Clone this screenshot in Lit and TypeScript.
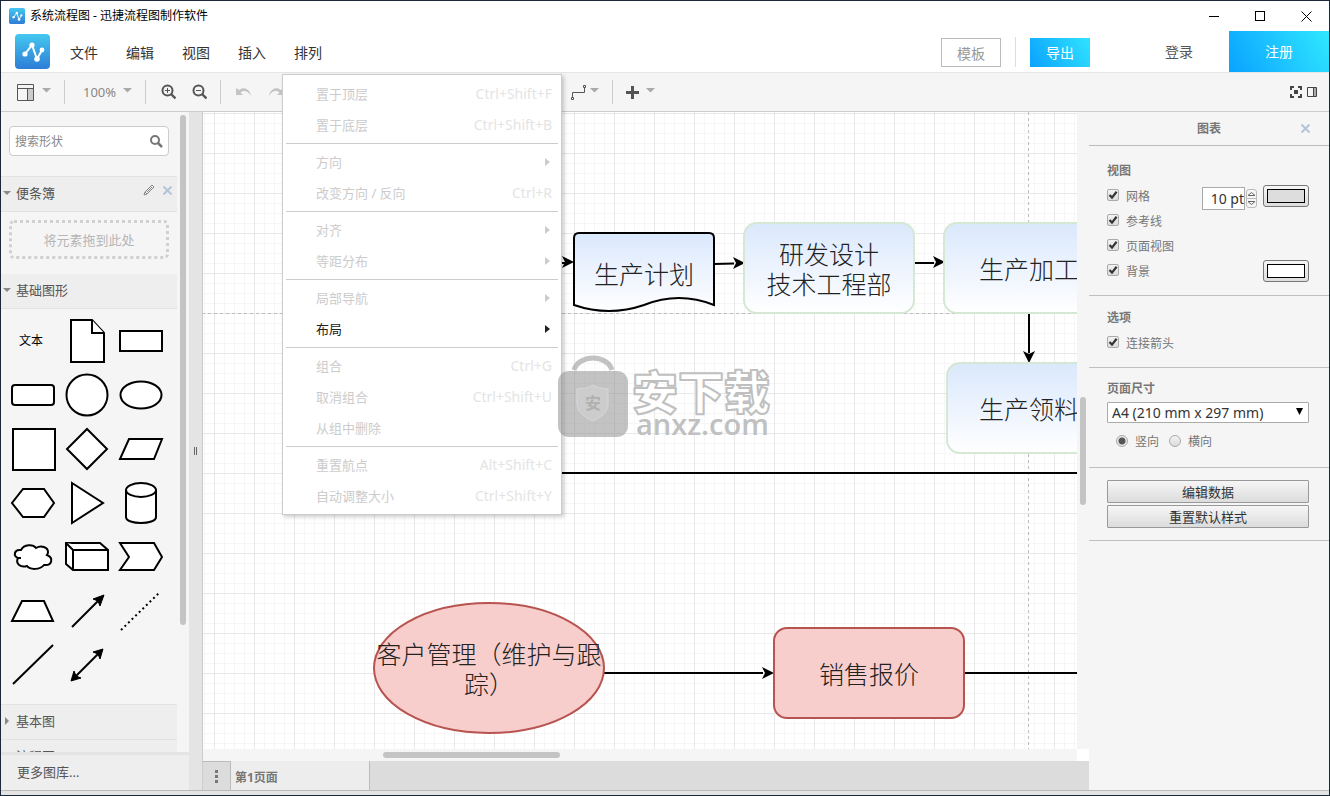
import { LitElement, html, svg, css } from "lit";
import { customElement, state } from "lit/decorators.js";
import { classMap } from "lit/directives/class-map.js";

interface MenuItem {
  label: string;
  keys?: string;
  submenu?: boolean;
  enabled?: boolean;
}

const ARRANGE_MENU: MenuItem[][] = [
  [
    { label: "置于顶层", keys: "Ctrl+Shift+F" },
    { label: "置于底层", keys: "Ctrl+Shift+B" },
  ],
  [
    { label: "方向", submenu: true },
    { label: "改变方向 / 反向", keys: "Ctrl+R" },
  ],
  [
    { label: "对齐", submenu: true },
    { label: "等距分布", submenu: true },
  ],
  [
    { label: "局部导航", submenu: true },
    { label: "布局", submenu: true, enabled: true },
  ],
  [
    { label: "组合", keys: "Ctrl+G" },
    { label: "取消组合", keys: "Ctrl+Shift+U" },
    { label: "从组中删除" },
  ],
  [
    { label: "重置航点", keys: "Alt+Shift+C" },
    { label: "自动调整大小", keys: "Ctrl+Shift+Y" },
  ],
];

const HEADER_MENUS = ["文件", "编辑", "视图", "插入", "排列"];

// Palette stencils, each drawn in a 54 x 54 cell whose centre is 27,27.
const STENCILS = [
  { name: "便笺", art: svg`<path d="M11 6H32L44 19V48H11Z"/><path d="M32 6V19H44"/>` },
  { name: "矩形", art: svg`<rect x="6" y="17" width="42" height="20"/>` },
  { name: "圆角矩形", art: svg`<rect x="6" y="17" width="42" height="20" rx="3"/>` },
  { name: "圆形", art: svg`<circle cx="27" cy="27" r="20.5"/>` },
  { name: "椭圆", art: svg`<ellipse cx="27" cy="27" rx="20.5" ry="13.5"/>` },
  { name: "正方形", art: svg`<rect x="7" y="7" width="42" height="41"/>` },
  { name: "菱形", art: svg`<path d="M27 7L47 27L27 47L7 27Z"/>` },
  { name: "平行四边形", art: svg`<path d="M15 17H48L40 37H6Z"/>` },
  { name: "六边形", art: svg`<path d="M17 13H38L48 27L38 41H17L6 27Z"/>` },
  { name: "三角形", art: svg`<path d="M12 7L43 27L12 47Z"/>` },
  {
    name: "圆柱",
    art: svg`<path d="M12 14V41C12 49 42 49 42 41V14"/><ellipse cx="27" cy="14" rx="15" ry="7"/>`,
  },
  {
    name: "云",
    art: svg`<path d="M15 20C18 14 27 14 30 18C35 15 42 17 42 22C42 23 42 24 41 25C48 28 46 36 38 35C34 40 24 40 21 36C15 38 9 34 12 28C7 26 8 19 15 20Z"/><path d="M11 28H15"/>`,
  },
  {
    name: "立方体",
    art: svg`<path d="M6 13H40L48 20V40H13L6 34Z"/><path d="M6 13L13 20H48M13 20V40"/>`,
  },
  { name: "步骤", art: svg`<path d="M6 13H40L48 27L40 40H6L15 27Z"/>` },
  { name: "梯形", art: svg`<path d="M16 17H38L47 37H6Z"/>` },
  {
    name: "箭头",
    art: svg`<path d="M12 43L39 16"/><path class="solid" d="M44 11L40 22L38 17L33 15Z"/>`,
  },
  { name: "虚线", art: svg`<path class="dotted" d="M7 46L46 8"/>` },
  { name: "直线", art: svg`<path d="M7 46L47 7"/>` },
  {
    name: "双向箭头",
    art: svg`<path d="M15 39L39 15"/><path class="solid" d="M43 11L40 21L38 16L33 14Z M11 43L14 33L16 38L21 40Z"/>`,
  },
];

@customElement("app-root")
export class AppRoot extends LitElement {
  @state() private orientation = "portrait";

  static styles = css`
    :host {
      display: flex;
      flex-direction: column;
      position: relative;
      box-sizing: border-box;
      height: 100vh;
      border: 1px solid #1b2838;
      background: #f5f5f5;
      color: #333;
      font: 13px/20px "Noto Sans", "Noto Sans CJK SC", sans-serif;
      overflow: hidden;
    }
    * { box-sizing: border-box; }
    button, input, select { font: inherit; color: inherit; margin: 0; }
    button { padding: 0; border: 0; background: none; }
    svg { display: block; fill: none; }

    .titlebar {
      display: flex; align-items: center; flex: none; height: 30px;
      padding-left: 8px; background: #fff; color: #000; font-size: 12px;
    }
    .titlebar .caption { flex: 1; padding-left: 5px; }
    .winbtn { width: 46px; height: 30px; display: grid; place-items: center; }

    .header {
      display: flex; align-items: center; flex: none; height: 42px;
      padding-left: 14px; background: #fff; border-bottom: 1px solid #e5e5e5;
      font-size: 14px;
    }
    .nav { display: flex; flex: 1; margin-left: 6px; }
    .navitem { position: relative; }
    .navitem > button { width: 56px; height: 41px; padding-top: 2px; }
    .template { width: 60px; height: 29px; margin-top: 2px; padding-top: 2px; border: 1px solid #bbb; color: #999; }
    .rule { width: 1px; height: 30px; background: #ddd; margin: 0 14px; }
    .export { width: 60px; height: 29px; margin-top: 2px; color: #fff; background: linear-gradient(60deg, #0aa2ff, #30e3ff); }
    .login { width: 60px; height: 41px; margin: 0 20px 0 59px; color: #555; }
    .register { width: 100px; height: 41px; color: #fff; background: linear-gradient(60deg, #0aa2ff, #30e8ff); }

    .menu {
      position: absolute; left: 2px; top: 43px; z-index: 5; width: 280px;
      padding: 4px 3px 2px; margin: 0; background: #fff; border: 1px solid #ccc;
      box-shadow: 2px 2px 4px rgba(0, 0, 0, 0.2); font-size: 13px;
    }
    .menu .group + .group { border-top: 1px solid #ccc; margin-top: 2px; padding-top: 3px; }
    .menu button {
      display: flex; align-items: center; justify-content: space-between;
      width: 100%; height: 31px; padding: 0 6px 2px 30px; color: #ccc; text-align: left;
    }
    .menu button.enabled { color: #222; }
    .menu .keys { color: #e4e4e4; font-size: 14px; }
    .menu svg { fill: currentColor; margin-right: 2px; }

    .toolbar {
      display: flex; align-items: center; flex: none; height: 39px;
      padding: 0 12px 0 16px; border-bottom: 1px solid #ccc; color: #888; font-size: 13px;
    }
    .toolbar button { display: flex; align-items: center; height: 30px; }
    .toolbar .bar { width: 1px; height: 24px; background: #ccc; margin: 0 13px; }
    .toolbar .gap { gap: 7px; }
    .toolbar .pair { display: flex; gap: 16px; margin-left: 2px; }
    .toolbar .format { width: 287px; }
    .toolbar .fill { flex: 1; }
    .toolbar .tight { gap: 4px; }
    .toolbar .view-toggles { display: flex; gap: 5px; }
    .toolbar .zoom { margin-left: 5px; gap: 7px; }

    .work { display: flex; flex: 1; min-height: 0; }
    .sidebar { display: flex; flex-direction: column; flex: none; width: 188px; }
    .palette { display: flex; flex: 1; min-height: 0; overflow: hidden; }
    .shapes { flex: 1; overflow: hidden; }
    .search {
      display: flex; align-items: center; height: 30px; margin: 14px 8px 20px;
      padding: 0 5px; border: 1px solid #ccc; border-radius: 4px; background: #fff;
    }
    .search input { flex: 1; min-width: 0; border: 0; padding: 2px 0 0; font-size: 12px; outline: 0; background: none; }
    .search input::placeholder { color: #888; opacity: 1; }
    .section {
      display: flex; align-items: center; width: 100%; height: 35px; gap: 5px;
      padding: 0 0 2px 2px; border-bottom: 1px solid #e2e2e2; background: #eee; color: #555; text-align: left;
    }
    .section.top { border-top: 1px solid #e2e2e2; height: 36px; }
    .section .title { flex: 1; display: flex; align-items: center; gap: 5px; }
    .section .tools { display: flex; gap: 8px; padding: 0 5px 6px 0; }
    .drop {
      display: grid; place-items: center; height: 39px; margin: 8px 8px 15px;
      border: 3px dotted #d0d0d0; border-radius: 5px; color: #b5b5b5;
    }
    .grid { display: grid; grid-template-columns: repeat(3, 54px); grid-auto-rows: 54px; padding: 5px 5px 12px; }
    .grid button { display: grid; place-items: center; }
    .grid .text { font-size: 12px; color: #000; padding-right: 4px; }
    .grid svg { width: 54px; height: 54px; fill: #fff; stroke: #000; stroke-width: 2; }
    .grid .solid { fill: #000; stroke-width: 1; }
    .grid .dotted { stroke-dasharray: 2 3; }
    .vbar { flex: none; width: 12px; background: #f5f5f5; padding: 0 3px; }
    .vbar i { display: block; width: 6px; border-radius: 3px; background: #c4c4c4; }
    .vbar .side { height: 510px; margin-top: 3px; }
    .vbar .page { height: 108px; margin-top: 285px; }
    .more { flex: none; height: 38px; border-top: 3px solid #e4e4e4; padding: 0 0 2px 16px; background: #eee; text-align: left; color: #555; }
    .splitter { flex: none; width: 14px; background: #e4e4e4; display: grid; place-items: center; border-right: 1px solid #ccc; }

    .center { display: flex; flex-direction: column; flex: 1; min-width: 0; background: #fff; }
    .viewport { display: flex; flex: 1; min-height: 0; }
    .canvas { flex: 1; min-width: 0; height: 100%; }
    .canvas text { font: 25px "Liberation Serif", "Noto Sans CJK SC", serif; font-weight: 300; fill: #222; text-anchor: middle; }
    .hbar { flex: none; height: 12px; margin-right: 12px; padding: 3px 180px; background: #f5f5f5; }
    .hbar i { display: block; width: 177px; height: 6px; border-radius: 3px; background: #c4c4c4; }
    .tabs { display: flex; flex: none; height: 29px; background: #dcdcdc; font-size: 12px; color: #777; }
    .tabs .dots { width: 28px; display: grid; place-items: center; border: solid #bbb; border-width: 1px 1px 0 0; }
    .tabs .tab { width: 139px; padding: 4px 0 0 4px; text-align: left; font-weight: bold; background: #ededed; border-right: 1px solid #bbb; }

    .format-panel { flex: none; width: 240px; color: #777; font-size: 12px; }
    .panel-title { display: flex; align-items: center; height: 34px; padding-right: 19px; border-bottom: 1px solid #bbb; }
    .panel-title h2 { flex: 1; margin: 0; padding-left: 28px; font-size: 12px; text-align: center; }
    .block { padding: 15px 20px 0 18px; border-bottom: 1px solid #c0c0c0; }
    .block h3 { margin: 0 0 2px; font-size: 12px; line-height: 20px; }
    .row { display: flex; align-items: center; height: 25px; }
    .row label { display: flex; align-items: center; gap: 7px; flex: 1; }
    .row label span, .radios span { padding-top: 3px; }
    .row input[type="checkbox"] { margin-bottom: 2px; }
    .view { height: 150px; }
    .options { height: 72px; padding-top: 12px; }
    .paper { height: 100px; padding-top: 11px; }
    .actions { height: 73px; padding-top: 12px; }
    input[type="checkbox"], input[type="radio"] {
      appearance: none; width: 12px; height: 12px; border: 1px solid #aaa; border-radius: 2px;
      background: linear-gradient(#f2f2f2, #dcdcdc);
    }
    input[type="checkbox"]:checked {
      background: url("data:image/svg+xml,%3Csvg xmlns='http://www.w3.org/2000/svg' viewBox='0 0 10 10'%3E%3Cpath d='M1.5 5L4 7.6L8.6 1.8' fill='none' stroke='%23333' stroke-width='2.2'/%3E%3C/svg%3E"), linear-gradient(#f2f2f2, #dcdcdc);
    }
    input[type="radio"] { border-radius: 50%; }
    input[type="radio"]:checked { background: radial-gradient(circle, #555 0 3px, #e8e8e8 4px); }
    .size { width: 43px; height: 23px; margin-top: 5px; padding: 0; border: 1px solid #aaa; background: #fff; color: #333; font-size: 14px; text-align: right; }
    .spin { display: flex; flex-direction: column; width: 11px; height: 19px; margin: 5px 6px 0 1px; border: 1px solid #bbb; border-radius: 3px; }
    .spin button { flex: 1; display: grid; place-items: center; }
    .spin button + button { border-top: 1px solid #bbb; }
    .color { width: 46px; height: 22px; padding: 3px; border: 1px solid #777; border-radius: 3px; background: linear-gradient(#f6f6f6, #ddd); }
    .color i { display: block; height: 14px; border: 1px solid #000; }
    .color .grey { background: #ddd; }
    .color .white { background: #fff; }
    .selectbox { position: relative; display: block; margin-top: 3px; }
    .selectbox select {
      appearance: none; display: block; width: 100%; height: 21px; padding: 0 4px; border: 1px solid #aaa;
      border-radius: 1px; background: #fff; color: #333; font-size: 14px; line-height: 19px;
    }
    .selectbox svg { position: absolute; right: 6px; top: 6px; }
    .radios { display: flex; gap: 10px; padding: 6px 0 0 9px; }
    .radios label { display: flex; align-items: center; gap: 7px; }
    .action {
      display: block; width: 100%; height: 23px; margin-bottom: 2px; border: 1px solid #999; border-radius: 1px;
      background: linear-gradient(#f6f6f6, #dcdcdc); color: #333; font-size: 13px;
    }
    .status { flex: none; height: 5px; border-top: 1px solid #bbb; background: #e4e4e4; }

    .watermark { position: absolute; left: 556px; top: 354px; z-index: 6; pointer-events: none; }
    .watermark .cn { font: 900 46px "Noto Sans CJK SC", sans-serif; fill: #fff; stroke: #c0c0c0; stroke-width: 2; stroke-linejoin: round; }
    .watermark .en { font: 600 29px "Open Sans", sans-serif; fill: #c0c0c0; }
    .watermark .seal { font: bold 16px "Noto Sans CJK SC", sans-serif; fill: #b0b0b0; }
  `;

  private logo(size: number) {
    return html`<svg width=${size} height=${size} viewBox="0 0 35 35" aria-hidden="true">
      <defs>
        <linearGradient id="logo" x1="0" y1="0" x2="0" y2="1">
          <stop offset="0" stop-color="#44c8f0" /><stop offset="1" stop-color="#2d7dd6" />
        </linearGradient>
      </defs>
      <rect width="35" height="35" rx="4" fill="url(#logo)" />
      <path d="M10 20L17 11L22 25L27 16" stroke="#fff" stroke-width="2" />
      <g fill="#fff">
        <circle cx="10" cy="20" r="2.6" /><circle cx="17" cy="11" r="2.6" />
        <circle cx="22" cy="25" r="2.8" /><circle cx="27" cy="16" r="2.4" />
      </g>
    </svg>`;
  }

  private caret() {
    return html`<svg width="9" height="8" aria-hidden="true"><path d="M0 0H9L4.5 4.5Z" fill="#aaa" /></svg>`;
  }

  private cross() {
    return html`<svg width="9" height="9" aria-hidden="true"><path d="M.5 .5L8.5 8.5M8.5 .5L.5 8.5" stroke="#b4c4d8" stroke-width="2" /></svg>`;
  }

  private magnifier(sign: unknown) {
    return html`<svg width="15" height="16" aria-hidden="true">
      <circle cx="6.5" cy="6.5" r="5" stroke="#555" stroke-width="2" />
      <path d="M10 10L14.5 14.5" stroke="#555" stroke-width="2.4" />${sign}
    </svg>`;
  }

  private renderMenu() {
    return html`<div class="menu" role="menu">
      ${ARRANGE_MENU.map(
        (group) => html`<div class="group">
          ${group.map(
            (item) => html`<button role="menuitem" class=${classMap({ enabled: !!item.enabled })}>
              <span>${item.label}</span>
              ${item.keys ? html`<span class="keys">${item.keys}</span>` : ""}
              ${item.submenu ? html`<svg width="5" height="8" aria-hidden="true"><path d="M0 0L5 4L0 8Z" /></svg>` : ""}
            </button>`
          )}
        </div>`
      )}
    </div>`;
  }

  private renderHeader() {
    return html`
      <div class="titlebar">
        ${this.logo(16)}
        <span class="caption">系统流程图 - 迅捷流程图制作软件</span>
        <button class="winbtn" aria-label="最小化"><svg width="11" height="11"><path d="M0 5.5H10" stroke="#000" /></svg></button>
        <button class="winbtn" aria-label="最大化"><svg width="11" height="11"><rect x=".5" y=".5" width="9" height="9" stroke="#000" /></svg></button>
        <button class="winbtn" aria-label="关闭"><svg width="11" height="11"><path d="M.5 .5L10.5 10.5M10.5 .5L.5 10.5" stroke="#000" /></svg></button>
      </div>
      <header class="header">
        ${this.logo(35)}
        <nav class="nav">
          ${HEADER_MENUS.map(
            (name) => html`<div class="navitem"><button>${name}</button>${name === "排列" ? this.renderMenu() : ""}</div>`
          )}
        </nav>
        <button class="template">模板</button>
        <span class="rule"></span>
        <button class="export">导出</button>
        <button class="login">登录</button>
        <button class="register">注册</button>
      </header>
    `;
  }

  private renderToolbar() {
    return html`<div class="toolbar" role="toolbar">
      <button class="gap" aria-label="视图布局">
        <svg width="18" height="17"><rect x="11" y="5" width="6" height="11" fill="#ccc" /><path d="M.5 .5H16.5V16.5H.5ZM.5 4.5H16.5M10.5 4.5V16.5" stroke="#555" /></svg>
        ${this.caret()}
      </button>
      <span class="bar"></span>
      <button class="zoom">100% ${this.caret()}</button>
      <span class="bar"></span>
      <div class="pair">
        <button aria-label="放大">${this.magnifier(svg`<path d="M4 6.5H9M6.5 4V9" stroke="#555"/>`)}</button>
        <button aria-label="缩小">${this.magnifier(svg`<path d="M4 6.5H9" stroke="#555"/>`)}</button>
      </div>
      <span class="bar"></span>
      <div class="pair">
        <button aria-label="撤销"><svg width="16" height="12"><path d="M0 2V9H7L4.5 6.5C7 4 12 4 15 10C14 3 8 0 3 4Z" fill="#c4c4c4" /></svg></button>
        <button aria-label="重做"><svg width="16" height="12"><path d="M16 2V9H9L11.500 6.500C9 4 4 4 1 10C2 3 8 0 13 4Z" fill="#c4c4c4" /></svg></button>
      </div>
      <span class="format"></span>
      <button class="tight" aria-label="连线">
        <svg width="15" height="15"><path d="M1.500 12V7.500H13.500V3M.5 12.500H2.500V14.500H.5ZM12.500 .5H14.500V2.500H12.500Z" stroke="#555" /></svg>
        ${this.caret()}
      </button>
      <span class="bar"></span>
      <button class="gap" aria-label="插入">
        <svg width="13" height="13"><path d="M6.500 0V13M0 6.500H13" stroke="#555" stroke-width="3" /></svg>
        ${this.caret()}
      </button>
      <span class="fill"></span>
      <div class="view-toggles">
        <button aria-label="全屏">
          <svg width="12" height="12"><path d="M1 4V1H4M8 1H11V4M11 8V11H8M4 11H1V8" stroke="#444" stroke-width="2" /><rect x="4" y="4" width="4" height="4" fill="#444" /></svg>
        </button>
        <button aria-label="格式面板">
          <svg width="10" height="11"><rect x="6" y="1" width="3" height="8" fill="#aaa" /><path d="M.5 .5H9.500V9.500H.5ZM6.500 .5V9.500" stroke="#444" /></svg>
        </button>
      </div>
    </div>`;
  }

  private arrowDown(open: boolean) {
    return open
      ? html`<svg width="8" height="4" aria-hidden="true"><path d="M0 0H8L4 4Z" fill="#888" /></svg>`
      : html`<svg width="8" height="8" aria-hidden="true"><path d="M2 0L6 4L2 8Z" fill="#888" /></svg>`;
  }

  private renderSidebar() {
    return html`<aside class="sidebar">
      <div class="palette">
        <div class="shapes">
          <div class="search">
            <input type="text" placeholder="搜索形状" aria-label="搜索形状" />
            <svg width="13" height="13" aria-hidden="true"><circle cx="5" cy="5" r="4" stroke="#777" stroke-width="2" /><path d="M8 8L12 12" stroke="#777" stroke-width="2.500" /></svg>
          </div>
          <div class="section top">
            <button class="title">${this.arrowDown(true)}便条簿</button>
            <div class="tools">
              <button aria-label="编辑"><svg width="12" height="12"><path d="M1 11L2 8L9 1L11 3L4 10ZM2 8L4 10M4 8L9 3" stroke="#888" /></svg></button>
              <button aria-label="关闭">${this.cross()}</button>
            </div>
          </div>
          <div class="drop">将元素拖到此处</div>
          <button class="section">${this.arrowDown(true)}基础图形</button>
          <div class="grid">
            <button class="text">文本</button>
            ${STENCILS.map((s) => html`<button aria-label=${s.name}><svg viewBox="0 0 54 54">${s.art}</svg></button>`)}
          </div>
          <button class="section top">${this.arrowDown(false)}基本图</button>
          <button class="section">${this.arrowDown(false)}流程图</button>
        </div>
        <div class="vbar"><i class="side"></i></div>
      </div>
      <button class="more">更多图库...</button>
    </aside>`;
  }

  private arrow(x: number, y: number, angle = 0) {
    return svg`<path d="M0 0L-12 6L-9 0L-12 -6Z" fill="#000" transform="translate(${x} ${y}) rotate(${angle})"/>`;
  }

  private renderCanvas() {
    // Diagram coordinates are window based; the group pans them to the viewport.
    return html`<svg class="canvas" role="img" aria-label="系统流程图">
      <defs>
        <pattern id="grid" x="11" y="1" width="40" height="40" patternUnits="userSpaceOnUse">
          <path d="M10.500 0V40M20.500 0V40M30.500 0V40M0 10.500H40M0 20.500H40M0 30.500H40" stroke="#f6f6f6" />
          <path d="M.5 0V40M0 .5H40" stroke="#e8e8e8" />
        </pattern>
        <linearGradient id="blue" x1="0" y1="0" x2="0" y2="1">
          <stop offset="0" stop-color="#dae8fc" /><stop offset="1" stop-color="#fff" />
        </linearGradient>
      </defs>
      <rect width="100%" height="100%" fill="url(#grid)" />
      <g transform="translate(-203 -112)">
        <path d="M202 313.500H1400M1028.500 100V900" stroke="#bbb" stroke-dasharray="3 3" />
        <g stroke="#000" stroke-width="2">
          <path d="M540 263H566M714 264L734 263.500M914 263H934M1029 313V353M540 473H1400M604 673H763M964 673H1400" />
          <path d="M574 305V238Q574 233 579 233H709Q714 233 714 238V305Q679 291 644 305Q609 317 574 305Z" fill="url(#blue)" />
        </g>
        ${this.arrow(574, 262)}${this.arrow(745, 263)}${this.arrow(945, 262)}${this.arrow(774, 673)}${this.arrow(1029, 363, 90)}
        <g fill="url(#blue)" stroke="#d5e8d4" stroke-width="2">
          <rect x="744" y="223" width="170" height="90" rx="13" />
          <rect x="944" y="223" width="170" height="90" rx="13" />
          <rect x="947" y="363" width="170" height="90" rx="13" />
        </g>
        <g fill="#f8cecc" stroke="#b85450" stroke-width="2">
          <ellipse cx="489" cy="668" rx="115" ry="65" />
          <rect x="774" y="628" width="190" height="90" rx="13" />
        </g>
        <text x="644" y="284">生产计划</text>
        <text x="829" y="264">研发设计</text>
        <text x="829" y="294">技术工程部</text>
        <text x="1029" y="279">生产加工</text>
        <text x="1029" y="419">生产领料</text>
        <text x="489" y="664">客户管理（维护与跟</text>
        <text x="489" y="694">踪）</text>
        <text x="869" y="684">销售报价</text>
      </g>
    </svg>`;
  }

  private renderCenter() {
    return html`<main class="center">
      <div class="viewport">
        ${this.renderCanvas()}
        <div class="vbar"><i class="page"></i></div>
      </div>
      <div class="hbar"><i></i></div>
      <div class="tabs">
        <button class="dots" aria-label="页面"><svg width="3" height="13"><path d="M0 1.500H3M0 6.500H3M0 11.500H3" stroke="#777" stroke-width="3" /></svg></button>
        <button class="tab">第1页面</button>
      </div>
    </main>`;
  }

  private check(label: string, extra: unknown = "") {
    return html`<div class="row"><label><input type="checkbox" checked /><span>${label}</span></label>${extra}</div>`;
  }

  private renderFormat() {
    return html`<aside class="format-panel">
      <div class="panel-title"><h2>图表</h2><button aria-label="关闭">${this.cross()}</button></div>
      <section class="block view">
        <h3>视图</h3>
        ${this.check(
          "网格",
          html`<input class="size" type="text" value="10 pt" aria-label="网格大小" />
            <span class="spin">
              <button aria-label="增大"><svg width="7" height="4"><path d="M0 3.500L3.500 .5L7 3.500Z" stroke="#666" /></svg></button>
              <button aria-label="减小"><svg width="7" height="4"><path d="M0 .5L3.500 3.500L7 .5Z" stroke="#666" /></svg></button>
            </span>
            <button class="color" aria-label="网格颜色"><i class="grey"></i></button>`
        )}
        ${this.check("参考线")} ${this.check("页面视图")}
        ${this.check("背景", html`<button class="color" aria-label="背景颜色"><i class="white"></i></button>`)}
      </section>
      <section class="block options">
        <h3>选项</h3>
        ${this.check("连接箭头")}
      </section>
      <section class="block paper">
        <h3>页面尺寸</h3>
        <label class="selectbox">
          <select aria-label="页面尺寸"><option>A4 (210 mm x 297 mm)</option></select>
          <svg width="7" height="7" aria-hidden="true"><path d="M0 0H7L3.500 7Z" fill="#000" /></svg>
        </label>
        <div class="radios">
          ${[["portrait", "竖向"], ["landscape", "横向"]].map(
            ([value, label]) => html`<label><input type="radio" name="orientation" .checked=${this.orientation === value}
              @change=${() => (this.orientation = value)} /><span>${label}</span></label>`
          )}
        </div>
      </section>
      <section class="block actions">
        <button class="action">编辑数据</button>
        <button class="action">重置默认样式</button>
      </section>
    </aside>`;
  }

  private renderWatermark() {
    return html`<svg class="watermark" width="216" height="84" aria-hidden="true">
      <path d="M17 15C22 -1 50 -1 55 15" stroke="#888" stroke-opacity=".5" stroke-width="5" />
      <rect x="1" y="16" width="70" height="66" rx="11" fill="#888" fill-opacity=".5" />
      <path d="M36 30C42 34 47 33 51 34V50C50 58 44 62 36 66C28 62 21 58 20 50V34C25 33 30 34 36 30Z" fill="#ccc" stroke="#d8d8d8" />
      <text class="seal" x="28" y="54">安</text>
      <text class="cn" x="75" y="54">安下载</text>
      <text class="en" x="79" y="80">anxz.com</text>
    </svg>`;
  }

  render() {
    return html`
      ${this.renderHeader()} ${this.renderToolbar()}
      <div class="work">
        ${this.renderSidebar()}
        <div class="splitter"><svg width="5" height="8" aria-hidden="true"><path d="M1.500 0V8M3.500 0V8" stroke="#666" /></svg></div>
        ${this.renderCenter()} ${this.renderFormat()}
      </div>
      <div class="status"></div>
      ${this.renderWatermark()}
    `;
  }
}
